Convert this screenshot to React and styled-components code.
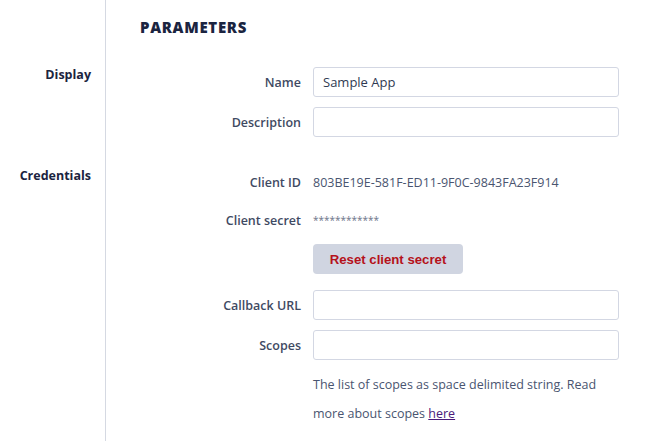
import React from 'react';
import styled, { createGlobalStyle } from 'styled-components';

const GlobalStyle = createGlobalStyle`
    html, body {
        margin: 0;
        padding: 0;
        background: #fff;
        font-family: "Open Sans", "Noto Sans", sans-serif;
    }
`;

const Page = styled.div`
    display: flex;
    flex-direction: column;
    min-height: 100vh;
`;

const Section = styled.section`
    display: grid;
    grid-template-columns: 106px 1fr;
    flex: ${props => props.$grow ? 1 : 'none'};

    & > * {
        padding-top: ${props => props.$top}px;
    }
`;

const Side = styled.div`
    border-right: 1px solid #d5d9e2;
    padding-right: 14px;
    text-align: right;
    font-size: 12.5px;
    font-weight: 700;
    line-height: 16px;
    color: #1b2440;
`;

const Main = styled.div`
    padding-left: 34px;
`;

const Heading = styled.h2`
    margin: 0;
    font-size: 15px;
    font-weight: 800;
    line-height: 20px;
    letter-spacing: 0.7px;
    color: #1b2440;
`;

const Fields = styled.div`
    display: grid;
    grid-template-columns: 161px 306px;
    column-gap: 12px;
    row-gap: 10px;
    align-items: center;
`;

const Label = styled.label`
    text-align: right;
    font-size: 12.5px;
    font-weight: 600;
    color: #3f4a63;
`;

const Value = styled.div`
    height: 28px;
    display: flex;
    align-items: center;
    font-size: ${props => props.$masked ? '10px' : '12.5px'};
    color: ${props => props.$masked ? '#6b7388' : '#4a5570'};
`;

const Input = styled.input`
    box-sizing: border-box;
    width: 100%;
    height: 30px;
    padding: 0 9px;
    border: 1px solid #d3d7e3;
    border-radius: 3px;
    font-family: inherit;
    font-size: 13px;
    color: #2f3a52;
    outline: none;
`;

const Button = styled.button`
    width: 150px;
    height: 30px;
    margin-bottom: 6px;
    border: none;
    border-radius: 4px;
    background: #d0d5e1;
    font-family: "Liberation Sans", Arial, sans-serif;
    font-size: 13.2px;
    font-weight: 700;
    color: #b5121b;
    cursor: pointer;
`;

const Help = styled.p`
    margin: 0;
    font-size: 12.5px;
    line-height: 29px;
    color: #4a5570;

    a {
        color: #4b1a7a;
    }
`;

const Spacer = styled.span``;

export default function App() {
    return (
        <Page>
            <GlobalStyle />
            <Section $top={17}>
                <Side />
                <Main>
                    <Heading>PARAMETERS</Heading>
                </Main>
            </Section>
            <Section $top={30}>
                <Side>Display</Side>
                <Main>
                    <Fields>
                        <Label>Name</Label>
                        <Input defaultValue="Sample App" />
                        <Label>Description</Label>
                        <Input />
                    </Fields>
                </Main>
            </Section>
            <Section $top={31} $grow>
                <Side>Credentials</Side>
                <Main>
                    <Fields>
                        <Label>Client ID</Label>
                        <Value>803BE19E-581F-ED11-9F0C-9843FA23F914</Value>
                        <Label>Client secret</Label>
                        <Value $masked>************</Value>
                        <Spacer />
                        <div><Button>Reset client secret</Button></div>
                        <Label>Callback URL</Label>
                        <Input />
                        <Label>Scopes</Label>
                        <Input />
                        <Spacer />
                        <Help>
                            The list of scopes as space delimited string. Read more about scopes <a href="#scopes">here</a>
                        </Help>
                    </Fields>
                </Main>
            </Section>
        </Page>
    );
}
